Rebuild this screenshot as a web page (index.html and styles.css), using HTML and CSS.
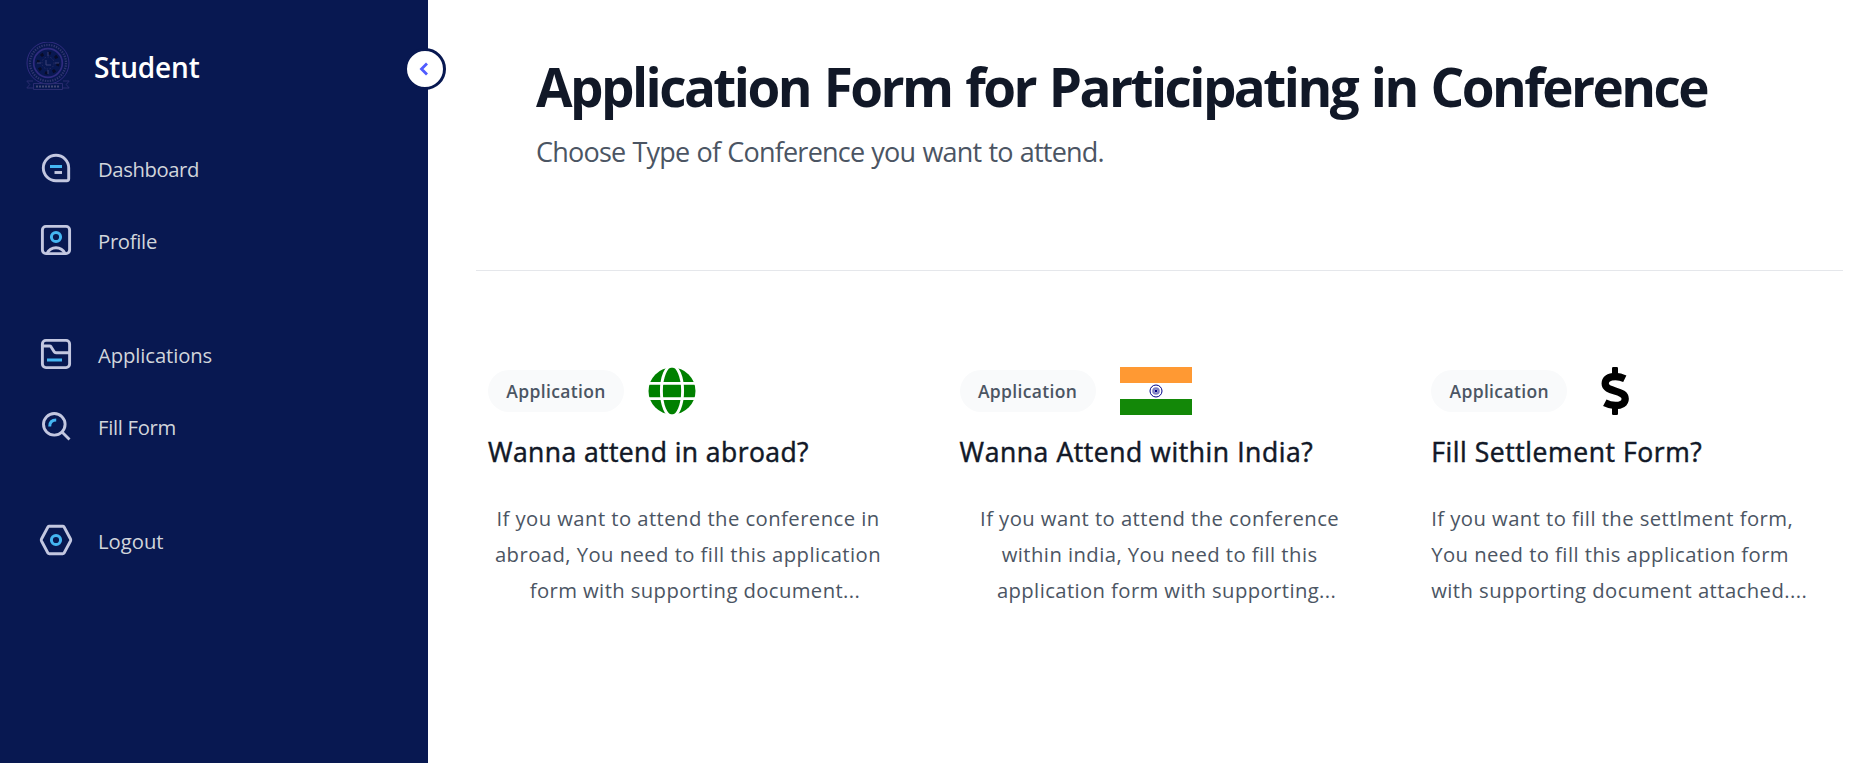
FILE: index.html
```
<!DOCTYPE html>
<html lang="en">
<head>
<meta charset="utf-8">
<title>Student - Conference Application</title>
<link rel="stylesheet" href="styles.css">
</head>
<body>
<div class="app">
  <aside class="sidebar">
    <button class="toggle" aria-label="Collapse sidebar">
      <svg viewBox="0 0 36 36"><path d="M20 12.500l-5.500 5.500 5.500 5.500" fill="none" stroke="#4f5bff" stroke-width="2.800"/></svg>
    </button>
    <div class="brand">
      <svg class="crest" viewBox="0 0 44 48" fill="none" stroke="#302c80">
        <circle cx="22" cy="21" r="21" stroke-width="1"/>
        <circle cx="22" cy="21" r="18" stroke="#30366f" stroke-width="2.2" stroke-dasharray="1.3 1.2"/>
        <circle cx="22" cy="21" r="14.3" stroke-width="1.7"/>
        <circle cx="22" cy="21" r="10" stroke="#080c28" stroke-width="3" stroke-dasharray="3 4.8"/>
        <circle cx="22" cy="21" r="6" stroke="#292d60" stroke-width="1" stroke-dasharray="1.5 1.5"/>
        <path d="M20 18v5h5M22 10v4M22 28v4M11 21h4M29 21h4" stroke="#3a4179"/>
        <path d="M7.500 41.500h29v6h-29zM7 39H.8l3 3.500-3 3.500H7M37 39h6.200l-3 3.500 3 3.500H37" stroke="#2a2c70"/>
        <path d="M10 44.500h24" stroke="#414773" stroke-width="2" stroke-dasharray="2 1"/>
      </svg>
      <span class="brand-name">Student</span>
    </div>
    <nav class="menu">
      <a class="item dashboard"><svg class="ico" viewBox="0 0 36 36"><path d="M18 5.300A12.700 12.700 0 0 0 18 30.700H28.700Q30.700 30.700 30.700 28.700V18A12.700 12.700 0 0 0 18 5.300z"/><path class="accent" d="M12 16.500h12"/><path d="M16.500 22.500H24"/></svg><span>Dashboard</span></a>
      <a class="item profile"><svg class="ico" viewBox="0 0 36 36"><rect x="4.400" y="4.400" width="27.200" height="27.200" rx="3.500"/><circle class="accent" cx="18" cy="15" r="4.600"/><path d="M9 31.500C11 27.500 14 25.800 18 25.800S25 27.500 27 31.500"/></svg><span>Profile</span></a>
      <a class="item applications group"><svg class="ico" viewBox="0 0 36 36"><rect x="4.400" y="4.400" width="27.200" height="27.200" rx="3.500"/><path d="M4.300 10H11.500Q12.500 10 13 10.700L16 15.500Q16.700 16.700 18 16.700H31.700"/><path class="accent" d="M9 24h15"/></svg><span>Applications</span></a>
      <a class="item fill"><svg class="ico" viewBox="0 0 36 36"><circle cx="16.300" cy="16.300" r="10.800"/><path d="M24 24l7.500 7.500"/><path class="accent" d="M11.700 18.500Q11.700 12 18.200 12"/></svg><span>Fill Form</span></a>
      <a class="item logout group"><svg class="ico" viewBox="0 0 36 36"><path d="M11.300 4.300H24.700Q25.600 4.300 26.100 5.100L32.500 17Q33 18 32.500 19L26.100 30.900Q25.600 31.700 24.700 31.700H11.300Q10.400 31.700 9.900 30.900L3.500 19Q3 18 3.500 17L9.900 5.100Q10.400 4.300 11.300 4.300z"/><circle class="accent" cx="18" cy="18" r="4.600"/></svg><span>Logout</span></a>
    </nav>
  </aside>
  <main class="content">
    <header class="intro">
      <h1>Application Form for Participating in Conference</h1>
      <p>Choose Type of Conference you want to attend.</p>
    </header>
    <section class="cards">
      <article class="card abroad">
        <div class="card-top"><span class="pill">Application</span>
          <svg class="mark" viewBox="0 0 48 48"><circle cx="24" cy="24" r="23.500" fill="#008000"/><g fill="none" stroke="#fff" stroke-width="2.900"><path d="M0 16.400h48M0 31.600h48"/><ellipse cx="24" cy="24" rx="10.600" ry="25.200"/></g></svg>
        </div>
        <h2>Wanna attend in abroad?</h2>
        <p class="centered">If you want to attend the conference in<br>abroad, You need to fill this application<br><span class="clamped">form with supporting document...</span></p>
      </article>
      <article class="card india">
        <div class="card-top"><span class="pill">Application</span>
          <svg class="mark flag" viewBox="0 0 72 48"><path fill="#ff9933" d="M0 0h72v16H0z"/><path fill="#fff" d="M0 16h72v16H0z"/><path fill="#138808" d="M0 32h72v16H0z"/><g fill="none" stroke="#000088"><circle cx="36" cy="24" r="6"/><circle cx="36" cy="24" r="2.700" stroke-width="2.200" opacity=".5"/></g><circle cx="36" cy="24" r="1.300" fill="#000088"/></svg>
        </div>
        <h2>Wanna Attend within India?</h2>
        <p class="centered">If you want to attend the conference<br>within india, You need to fill this<br><span class="clamped">application form with supporting...</span></p>
      </article>
      <article class="card settle">
        <div class="card-top"><span class="pill">Application</span>
          <svg class="mark" viewBox="0 0 48 48"><rect x="21" width="6" height="10" rx="1.200"/><rect x="21" y="38" width="6" height="10" rx="1.200"/><path d="M33.800 11.700C30.500 10.100 28 9.500 24.500 9.500 17.500 9.500 14.200 12.400 14.200 16.500 14.200 21 18.500 22.300 24 23.900 30 25.600 34.200 27.300 34.200 31.700 34.200 36.400 30 38.500 24.500 38.500 20.500 38.500 17 37.500 13.800 35.800" fill="none" stroke="#000" stroke-width="7.300"/></svg>
        </div>
        <h2>Fill Settlement Form?</h2>
        <p>If you want to fill the settlment form,<br>You need to fill this application form<br>with supporting document attached....</p>
      </article>
    </section>
  </main>
</div>
</body>
</html>
```
FILE: styles.css
```
* { box-sizing: border-box; }
body { margin: 0; background: #fff; font-family: "Open Sans", "Noto Sans", sans-serif; }
h1, h2, p { margin: 0; white-space: nowrap; }
svg { display: block; flex: none; }

.app { display: flex; height: 763px; overflow: hidden; }

.sidebar { position: relative; flex: none; width: 428px; background: #081851; padding: 42px 26px 0; }
.toggle { position: absolute; right: -18px; top: 48px; width: 42px; height: 42px; padding: 0; border: 3px solid #081851; border-radius: 50%; background: #fff; }
.brand { display: flex; align-items: center; gap: 24px; height: 48px; }
.crest { width: 44px; height: 48px; }
.brand-name { color: #fff; font-size: 28px; font-weight: 600; line-height: 42px; letter-spacing: -.15px; padding-top: 2px; }
.menu { display: flex; flex-direction: column; padding: 42px 0 0 12px; }
.item { display: flex; align-items: center; gap: 24px; height: 72px; color: #d1d5db; font-size: 20.25px; letter-spacing: -.3px; }
.item span { padding-top: 2px; }
.group { margin-top: 42px; }
.applications { letter-spacing: -.1px; }
.logout { letter-spacing: 0; }
.dashboard { letter-spacing: -.4px; }
.ico { width: 36px; height: 36px; fill: none; stroke: #c3c7e0; stroke-width: 2.9; }
.ico .accent { stroke: #45b6f2; stroke-width: 3; }

.content { flex: 1; padding: 0 33px 0 48px; }
.intro { height: 271px; padding: 60px 60px 0; border-bottom: 1px solid #e5e7eb; }
.intro h1 { color: #111827; font-size: 53px; font-weight: 700; line-height: 54px; letter-spacing: -2.56px; word-spacing: 2.6px; }
.intro p { margin-top: 20px; color: #4b5563; font-size: 27px; line-height: 36px; letter-spacing: -.78px; word-spacing: .8px; }

.cards { display: grid; grid-template-columns: repeat(3, 400px); column-gap: 71.6px; padding: 96px 0 0 12px; }
.card-top { display: flex; align-items: center; gap: 24px; height: 48px; }
.pill { width: 136px; height: 42px; border-radius: 21px; background: #f9fafb; color: #4b5563; text-align: center; font-size: 17.5px; font-weight: 600; line-height: 43px; letter-spacing: .35px; }
.mark { width: 48px; height: 48px; }
.flag { width: 72px; }
.card h2 { margin-top: 19px; color: #111827; font-size: 26.5px; font-weight: 500; line-height: 36px; letter-spacing: .58px; -webkit-text-stroke: .5px #111827; }
.abroad h2 { letter-spacing: .43px; }
.card p { margin-top: 30px; color: #4b5563; font-size: 20.25px; line-height: 36px; letter-spacing: .44px; }
.card .centered { text-align: center; }
.clamped { padding-left: 14px; letter-spacing: .4px; }
```
